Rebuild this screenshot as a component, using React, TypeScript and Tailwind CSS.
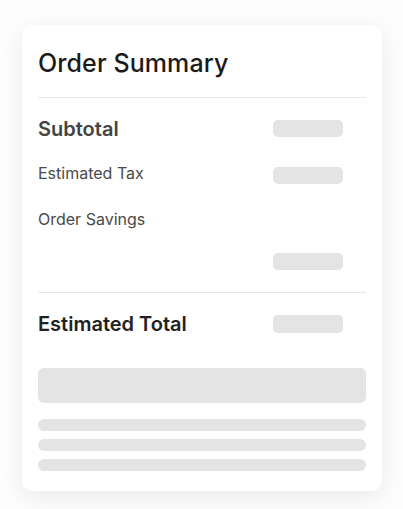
import React from 'react'

function Bar({ className }: { className: string }) {
    return <div className={`bg-[#e4e4e4] ${className}`} />
}

export default function App() {
    return (
        <div className="min-h-[509px] w-[403px] bg-[#fdfdfd] pt-[25px] pl-[22px] font-['Inter',sans-serif]">
            <div className="w-[360px] rounded-[10px] bg-white px-4 pt-[23px] pb-[20px] shadow-[0_6px_24px_rgba(0,0,0,0.08)]">
                <h2 className="h-[30px] text-[25px] leading-[30px] font-medium tracking-[0.1px] text-[#1b1b1b]">
                    Order Summary
                </h2>
                <div className="mt-[19px] h-px bg-[#e6e6e6]" />

                <div className="mt-[22px] flex h-[17px] items-center justify-between">
                    <span className="text-[20px] font-semibold text-[#444]">Subtotal</span>
                    <Bar className="mr-[23px] h-[17px] w-[70px] rounded-[5px]" />
                </div>

                <div className="mt-[30px] flex h-[17px] items-center justify-between">
                    <span className="-mt-[6px] text-[16px] text-[#4a4a4a]">Estimated Tax</span>
                    <Bar className="mr-[23px] h-[17px] w-[70px] rounded-[5px]" />
                </div>

                <div className="mt-[25px] flex h-[20px] items-center">
                    <span className="text-[16px] text-[#4a4a4a]">Order Savings</span>
                </div>

                <div className="mt-[24px] flex h-[17px] items-center justify-end">
                    <Bar className="mr-[23px] h-[17px] w-[70px] rounded-[5px]" />
                </div>

                <div className="mt-[22px] h-px bg-[#e6e6e6]" />

                <div className="mt-[22px] flex h-[18px] items-center justify-between">
                    <span className="text-[20px] font-semibold text-[#222]">Estimated Total</span>
                    <Bar className="mr-[23px] h-[18px] w-[70px] rounded-[5px]" />
                </div>

                <Bar className="mt-[35px] h-[35px] w-full rounded-[6px]" />

                <div className="mt-[16px] flex flex-col gap-[8px]">
                    <Bar className="h-[12px] w-full rounded-full" />
                    <Bar className="h-[12px] w-full rounded-full" />
                    <Bar className="h-[12px] w-full rounded-full" />
                </div>
            </div>
        </div>
    )
}
